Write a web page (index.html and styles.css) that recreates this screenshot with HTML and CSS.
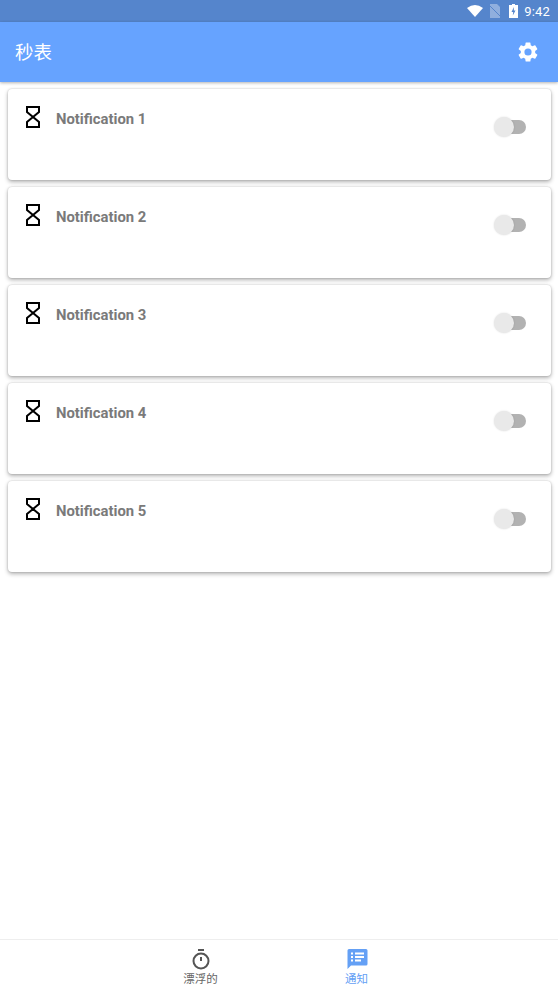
FILE: index.html
```
<!DOCTYPE html>
<html lang="zh">
<head>
<meta charset="utf-8">
<title>秒表</title>
<link rel="stylesheet" href="styles.css">
</head>
<body>
<div class="phone">
  <div class="statusbar">
    <svg class="st-wifi" viewBox="0 0 16 12"><path d="M0 3 Q8 -3 16 3 L8 12 Z" fill="#fff"/></svg>
    <svg class="st-sim" viewBox="0 0 12 14"><path d="M1 0 H8 L11 3 V14 H1 Z" fill="#fff" fill-opacity=".35"/><path d="M0 1 L12 13" stroke="#5585cc" stroke-width="1"/></svg>
    <svg class="st-batt" viewBox="0 0 9 14"><path d="M3 0 H6 V1 H9 V14 H0 V1 H3 Z" fill="#fff"/><path d="M5 3 L2.5 8 H4.2 L3.8 11.5 L6.5 6.5 H4.8 Z" fill="#5585cc"/></svg>
    <span class="st-time">9:42</span>
  </div>
  <header class="appbar">
    <span class="appbar-title">秒表</span>
    <svg class="gear" viewBox="0 0 24 24"><path fill="#fff" d="M19.14 12.94c.04-.3.06-.61.06-.94s-.02-.64-.07-.94l2.03-1.58a.49.49 0 0 0 .12-.61l-1.92-3.32a.49.49 0 0 0-.59-.22l-2.39.96a7 7 0 0 0-1.62-.94l-.36-2.54a.48.48 0 0 0-.48-.41h-3.84a.48.48 0 0 0-.47.41l-.36 2.54c-.59.24-1.13.57-1.62.94l-2.39-.96a.49.49 0 0 0-.59.22L2.73 8.87a.48.48 0 0 0 .12.61l2.03 1.58c-.05.3-.08.62-.08.94s.02.64.07.94l-2.03 1.58a.49.49 0 0 0-.12.61l1.92 3.32c.12.22.37.29.59.22l2.39-.96c.5.38 1.03.7 1.62.94l.36 2.54c.05.24.24.41.48.41h3.84c.24 0 .44-.17.47-.41l.36-2.54c.59-.24 1.13-.56 1.62-.94l2.39.96c.22.08.47 0 .59-.22l1.92-3.32a.48.48 0 0 0-.12-.61l-2.01-1.58zM12 15.6A3.6 3.6 0 1 1 12 8.4a3.6 3.6 0 0 1 0 7.2z"/></svg>
  </header>
  <main class="list">
    <article class="card">
      <svg class="glass" viewBox="0 0 16 22"><path d="M2 1 H14 V6 L2 16 V21 H14 V16 L2 6 Z" fill="none" stroke="#000" stroke-width="2"/></svg>
      <span class="card-title">Notification 1</span>
      <span class="toggle"><span class="knob"></span></span>
    </article>
    <article class="card">
      <svg class="glass" viewBox="0 0 16 22"><path d="M2 1 H14 V6 L2 16 V21 H14 V16 L2 6 Z" fill="none" stroke="#000" stroke-width="2"/></svg>
      <span class="card-title">Notification 2</span>
      <span class="toggle"><span class="knob"></span></span>
    </article>
    <article class="card">
      <svg class="glass" viewBox="0 0 16 22"><path d="M2 1 H14 V6 L2 16 V21 H14 V16 L2 6 Z" fill="none" stroke="#000" stroke-width="2"/></svg>
      <span class="card-title">Notification 3</span>
      <span class="toggle"><span class="knob"></span></span>
    </article>
    <article class="card">
      <svg class="glass" viewBox="0 0 16 22"><path d="M2 1 H14 V6 L2 16 V21 H14 V16 L2 6 Z" fill="none" stroke="#000" stroke-width="2"/></svg>
      <span class="card-title">Notification 4</span>
      <span class="toggle"><span class="knob"></span></span>
    </article>
    <article class="card">
      <svg class="glass" viewBox="0 0 16 22"><path d="M2 1 H14 V6 L2 16 V21 H14 V16 L2 6 Z" fill="none" stroke="#000" stroke-width="2"/></svg>
      <span class="card-title">Notification 5</span>
      <span class="toggle"><span class="knob"></span></span>
    </article>
  </main>
  <nav class="tabbar">
    <div class="tab">
      <svg class="tab-icon" viewBox="0 0 22 22"><g fill="none" stroke="#555" stroke-width="2"><circle cx="11" cy="13" r="7.5"/><path d="M8 2 H14"/><path d="M11 9 V13"/></g></svg>
      <span class="tab-label">漂浮的</span>
    </div>
    <div class="tab tab-active">
      <svg class="tab-icon" viewBox="0 0 22 22"><path d="M3 1 H20 a1.5 1.5 0 0 1 1.5 1.5 V16 a1.5 1.5 0 0 1 -1.5 1.5 H5 L1.5 21 V2.5 A1.5 1.5 0 0 1 3 1 Z" fill="#64a0f5"/><path d="M5 5.5 H7 M5 9 H7 M5 12.5 H7 M9 5.5 H18 M9 9 H18 M9 12.5 H15" stroke="#fff" stroke-width="2"/></svg>
      <span class="tab-label">通知</span>
    </div>
  </nav>
</div>
</body>
</html>
```
FILE: styles.css
```
* { box-sizing: border-box; }
html, body { margin: 0; padding: 0; }
body { width: 558px; height: 992px; background: #fff; font-family: Roboto, "Noto Sans CJK SC", sans-serif; overflow: hidden; }
.phone { width: 558px; height: 992px; display: flex; flex-direction: column; }
.statusbar { height: 22px; background: #5585cc; display: flex; align-items: center; justify-content: flex-end; padding-right: 8px; flex: none; }
.st-wifi { width: 16px; height: 12px; margin-right: 6px; }
.st-sim { width: 12px; height: 14px; margin-right: 8px; }
.st-batt { width: 9px; height: 14px; margin-right: 6px; }
.st-time { color: #fff; font-size: 13px; letter-spacing: .2px; }
.appbar { height: 60px; background: #66a3ff; display: flex; align-items: center; justify-content: space-between; padding: 0 20px 0 15px; flex: none; box-shadow: 0 1px 3px rgba(0,0,0,.3); position: relative; }
.appbar-title { color: #fff; font-size: 18.5px; line-height: 26px; margin-top: -2px; font-family: "Noto Sans CJK SC", sans-serif; }
.gear { width: 24px; height: 24px; margin-right: -2px; }
.list { flex: 1; padding: 7px 7px 0 8px; display: flex; flex-direction: column; gap: 7px; }
.card { height: 91px; background: #fff; border-radius: 4px; box-shadow: 0 0 2px rgba(0,0,0,.2), 0 2px 4px rgba(0,0,0,.3); display: flex; align-items: flex-start; padding: 17px 25px 0 17px; }
.glass { width: 16px; height: 22px; flex: none; }
.card-title { margin: 4px 0 0 15px; font-size: 14.85px; font-weight: 700; color: #7a7a7a; flex: 1; }
.toggle { width: 30px; height: 14px; margin-top: 14px; background: #b2b2b2; border-radius: 7px; position: relative; flex: none; }
.knob { position: absolute; left: -2px; top: -3px; width: 20px; height: 20px; border-radius: 50%; background: #e9e9e9; box-shadow: 0 0 2px rgba(0,0,0,.15); }
.tabbar { height: 53px; border-top: 1px solid #eee; display: flex; justify-content: center; flex: none; padding-right: 1px; }
.tab { width: 156px; display: flex; flex-direction: column; align-items: center; padding-top: 8px; color: #666; }
.tab-active { color: #64a0f5; }
.tab-icon { width: 22px; height: 22px; }
.tab-label { font-size: 11.5px; line-height: 15px; margin-top: 1px; font-family: "Noto Sans CJK SC", sans-serif; }
```
